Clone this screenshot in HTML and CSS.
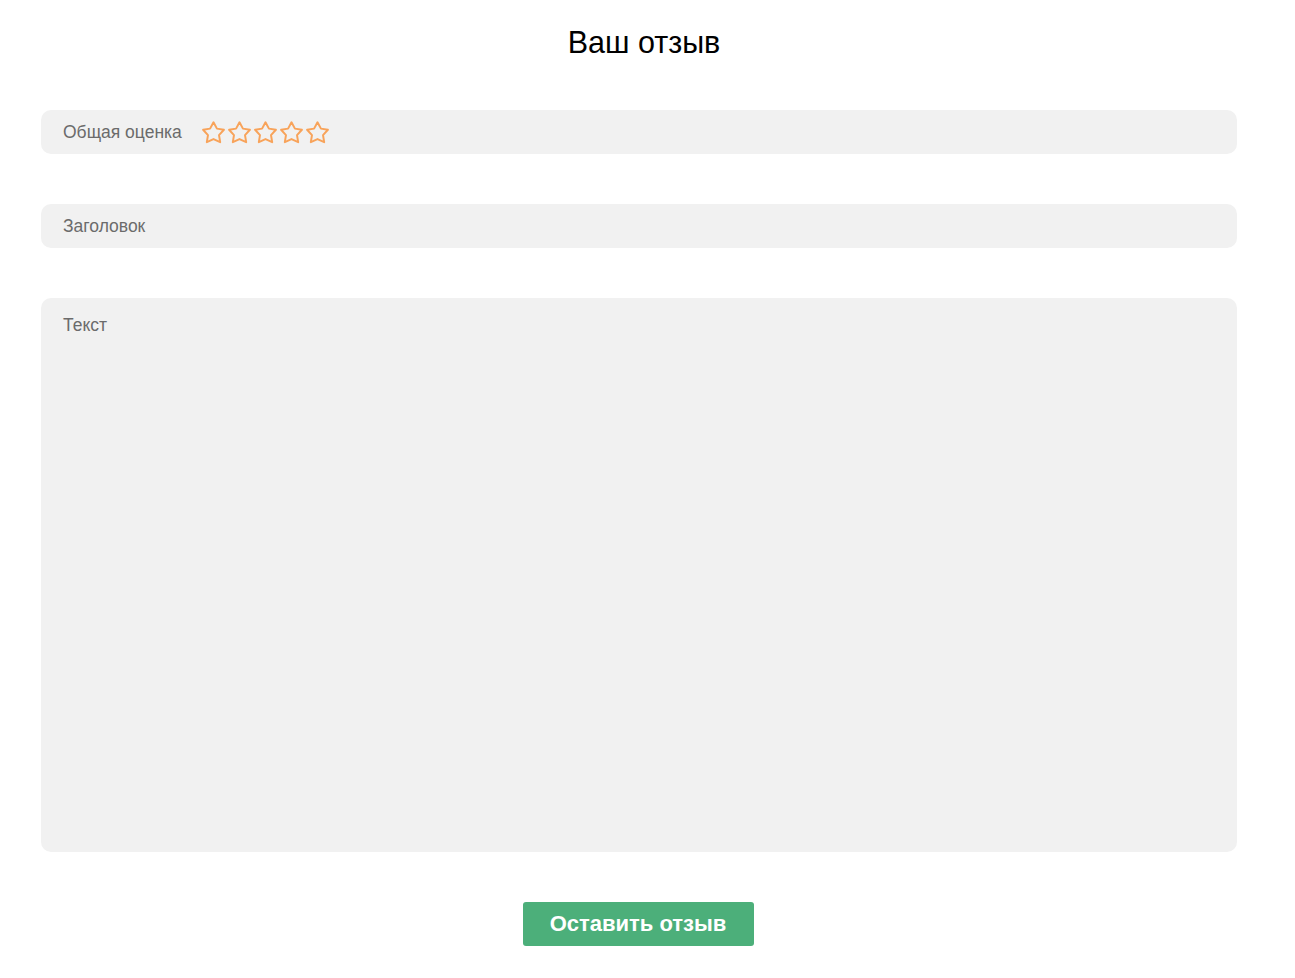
FILE: index.html
```html
<!DOCTYPE html>
<html lang="ru">
<head>
<meta charset="utf-8">
<link rel="stylesheet" href="styles.css">
</head>
<body>
<div class="page">
  <h1 class="title">Ваш отзыв</h1>
  <div class="field rating">
    <span class="label">Общая оценка</span>
    <div class="stars">
      <svg class="star" viewBox="0 0 24 24"><path d="M12 2.2L15.3 8.3 22 9.4 17.3 14.5 18.4 21.3 12 18.3 5.6 21.3 6.7 14.5 2 9.4 8.7 8.3z"/></svg>
      <svg class="star" viewBox="0 0 24 24"><path d="M12 2.2L15.3 8.3 22 9.4 17.3 14.5 18.4 21.3 12 18.3 5.6 21.3 6.7 14.5 2 9.4 8.7 8.3z"/></svg>
      <svg class="star" viewBox="0 0 24 24"><path d="M12 2.2L15.3 8.3 22 9.4 17.3 14.5 18.4 21.3 12 18.3 5.6 21.3 6.7 14.5 2 9.4 8.7 8.3z"/></svg>
      <svg class="star" viewBox="0 0 24 24"><path d="M12 2.2L15.3 8.3 22 9.4 17.3 14.5 18.4 21.3 12 18.3 5.6 21.3 6.7 14.5 2 9.4 8.7 8.3z"/></svg>
      <svg class="star" viewBox="0 0 24 24"><path d="M12 2.2L15.3 8.3 22 9.4 17.3 14.5 18.4 21.3 12 18.3 5.6 21.3 6.7 14.5 2 9.4 8.7 8.3z"/></svg>
    </div>
  </div>
  <div class="field">
    <span class="label">Заголовок</span>
  </div>
  <div class="field textarea">
    <span class="label">Текст</span>
  </div>
  <div class="actions">
    <button class="submit">Оставить отзыв</button>
  </div>
</div>
</body>
</html>
```
FILE: styles.css
```css
html, body {
  margin: 0;
  padding: 0;
  background: #fff;
}
body {
  font-family: "Liberation Sans", Arial, sans-serif;
}
.page {
  width: 1196px;
  margin-left: 41px;
  display: flex;
  flex-direction: column;
  gap: 50px;
}
.title {
  margin: 0;
  padding-top: 24px;
  height: 36px;
  font-size: 30.5px;
  line-height: 36px;
  font-weight: normal;
  color: #000;
  text-align: center;
  transform: translateX(5px);
}
.field {
  background: #f1f1f1;
  border-radius: 10px;
  height: 44px;
  box-sizing: border-box;
  padding: 0 22px;
  display: flex;
  align-items: center;
}
.label {
  font-size: 17.5px;
  color: #6b6b6b;
}
.stars {
  display: flex;
  gap: 1px;
  margin-left: 19px;
  margin-top: 1px;
}
.star {
  width: 25px;
  height: 25px;
  overflow: visible;
  fill: none;
  stroke: #f8a35a;
  stroke-width: 1.9;
  stroke-linejoin: round;
}
.textarea {
  height: 554px;
  align-items: flex-start;
  padding-top: 17px;
}
.actions {
  display: flex;
  justify-content: center;
}
.submit {
  width: 231px;
  height: 44px;
  border: none;
  border-radius: 3px;
  background: #4caf7a;
  color: #fff;
  font-family: "Liberation Sans", Arial, sans-serif;
  font-weight: bold;
  font-size: 22px;
  padding: 0;
  transform: translateX(-1px);
}
```
